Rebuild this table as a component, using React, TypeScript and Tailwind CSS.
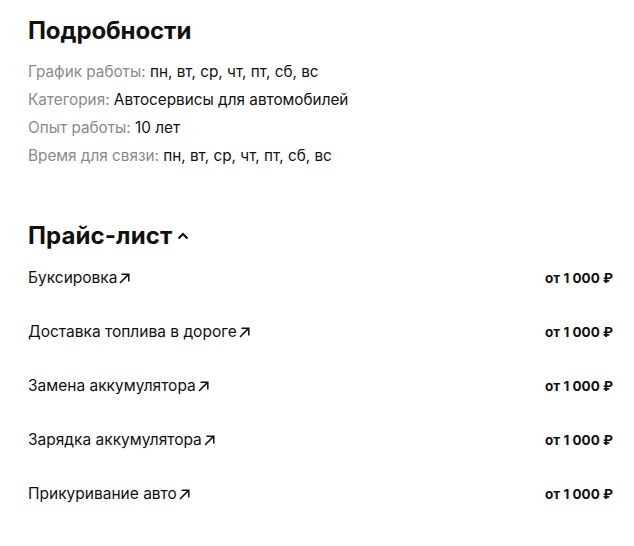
import { FC } from "react";

const details = [
  { label: "График работы:", value: "пн, вт, ср, чт, пт, сб, вс" },
  { label: "Категория:", value: "Автосервисы для автомобилей" },
  { label: "Опыт работы:", value: "10 лет" },
  { label: "Время для связи:", value: "пн, вт, ср, чт, пт, сб, вс" },
];

const prices = [
  "Буксировка",
  "Доставка топлива в дороге",
  "Замена аккумулятора",
  "Зарядка аккумулятора",
  "Прикуривание авто",
];

const Arrow: FC = () => (
  <svg width="11" height="11" viewBox="0 0 11 11" fill="none" className="ml-[2px] mt-px inline-block">
    <path d="M1 10L9.6 1.4M2.5 1.2H9.8V8.5" stroke="#111" strokeWidth="1.5" />
  </svg>
);

const App: FC = () => {
  return (
    <div className="bg-white min-h-[546px] pl-7 pr-[21px] pt-[15px] font-['Inter',sans-serif] text-[#111]">
      <h1 className="text-[24px] font-bold leading-8 tracking-[-0.1px]">Подробности</h1>
      <div className="mt-[11px] text-[15.3px] leading-7">
        {details.map((d) => (
          <p key={d.label}>
            <span className="text-[#8a8a8a]">{d.label}</span> {d.value}
          </p>
        ))}
      </div>
      <div className="mt-[50px] flex items-start">
        <h2 className="text-[24px] font-bold leading-8 tracking-[0.1px]">Прайс-лист</h2>
        <svg width="12" height="8" viewBox="0 0 12 8" fill="none" className="ml-[5px] mt-[12px]">
          <path d="M1.5 6.5L6 2L10.5 6.5" stroke="#111" strokeWidth="2.2" />
        </svg>
      </div>
      <div className="mt-[9px]">
        {prices.map((p) => (
          <div key={p} className="flex items-center justify-between h-[54px] pb-[20px] text-[15.5px]">
            <span className="flex items-center">
              {p}
              <Arrow />
            </span>
            <span className="font-bold text-[13.5px]">от 1 000 ₽</span>
          </div>
        ))}
      </div>
    </div>
  );
};

export default App;
